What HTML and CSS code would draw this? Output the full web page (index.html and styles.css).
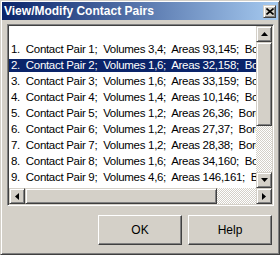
FILE: index.html
```html
<!DOCTYPE html>
<html lang="en">
<head>
  <meta charset="UTF-8">
  <title>View/Modify Contact Pairs</title>
  <link rel="stylesheet" href="styles.css">
</head>
<body>
  <div class="window">
    <div class="titlebar">
      <span class="title">View/Modify Contact Pairs</span>
      <span class="close raised">
        <svg width="8" height="7" viewBox="0 0 8 7"><path d="M0.5 0.5 L7.5 6.5 M7.5 0.5 L0.5 6.5" stroke="#000" stroke-width="1.6" fill="none"/></svg>
      </span>
    </div>

    <div class="listbox">
      <div class="list-top">
        <div class="items">
          <div class="item blank"></div>
          <div class="item">1.  Contact Pair 1;  Volumes 3,4;  Areas 93,145;  Border 1</div>
          <div class="item sel">2.  Contact Pair 2;  Volumes 1,6;  Areas 32,158;  Border 2</div>
          <div class="item">3.  Contact Pair 3;  Volumes 1,6;  Areas 33,159;  Border 3</div>
          <div class="item">4.  Contact Pair 4;  Volumes 1,4;  Areas 10,146;  Border 4</div>
          <div class="item">5.  Contact Pair 5;  Volumes 1,2;  Areas 26,36;  Border 5</div>
          <div class="item">6.  Contact Pair 6;  Volumes 1,2;  Areas 27,37;  Border 6</div>
          <div class="item">7.  Contact Pair 7;  Volumes 1,2;  Areas 28,38;  Border 7</div>
          <div class="item">8.  Contact Pair 8;  Volumes 1,6;  Areas 34,160;  Border 8</div>
          <div class="item">9.  Contact Pair 9;  Volumes 4,6;  Areas 146,161;  Border 9</div>
        </div>
        <div class="vscroll">
          <div class="sbtn raised">
            <svg width="7" height="4" viewBox="0 0 7 4"><path d="M3.5 0 L7 4 L0 4 Z" fill="#000"/></svg>
          </div>
          <div class="vthumb raised"></div>
          <div class="track"></div>
          <div class="sbtn raised">
            <svg width="7" height="4" viewBox="0 0 7 4"><path d="M0 0 L7 0 L3.5 4 Z" fill="#000"/></svg>
          </div>
        </div>
      </div>
      <div class="hscroll">
        <div class="sbtn raised">
          <svg width="4" height="7" viewBox="0 0 4 7"><path d="M4 0 L4 7 L0 3.5 Z" fill="#000"/></svg>
        </div>
        <div class="hthumb raised"></div>
        <div class="track"></div>
        <div class="sbtn raised">
          <svg width="4" height="7" viewBox="0 0 4 7"><path d="M0 0 L4 3.5 L0 7 Z" fill="#000"/></svg>
        </div>
      </div>
    </div>

    <div class="buttons">
      <div class="button">OK</div>
      <div class="button">Help</div>
    </div>
  </div>
</body>
</html>
```

FILE: styles.css
```css
body {
  margin: 0;
  background: #d4d0c8;
  font-family: "Liberation Sans", Arial, sans-serif;
}
.window {
  width: 280px;
  height: 255px;
  box-sizing: border-box;
  padding: 1px;
  background: #d4d0c8;
  border: 1px solid;
  border-color: #d4d0c8 #404040 #404040 #d4d0c8;
  box-shadow: inset 1px 1px #fff, inset -1px -1px #808080;
}
.raised {
  box-sizing: border-box;
  background: #d4d0c8;
  border: 1px solid;
  border-color: #d4d0c8 #404040 #404040 #d4d0c8;
  box-shadow: inset 1px 1px #fff, inset -1px -1px #808080;
}
.titlebar {
  height: 18px;
  display: flex;
  align-items: center;
  justify-content: space-between;
  padding: 0 2px 0 2px;
  background: linear-gradient(to right, #0a246a, #a6caf0);
}
.title {
  color: #fff;
  font-weight: bold;
  font-size: 12px;
}
.close {
  width: 13px;
  height: 13px;
  display: flex;
  align-items: center;
  justify-content: center;
}

.listbox {
  margin: 4px 4px 0 5px;
  height: 182px;
  box-sizing: border-box;
  display: flex;
  flex-direction: column;
  border: 1px solid;
  border-color: #808080 #fff #fff #808080;
  box-shadow: inset 1px 1px #404040, inset -1px -1px #d4d0c8;
  padding: 1px;
}
.list-top {
  flex: 1;
  display: flex;
  min-height: 0;
}
.items {
  flex: 1;
  background: #fff;
  overflow: hidden;
  font-size: 11.5px;
  letter-spacing: -0.3px;
  color: #000;
}
.item {
  height: 13px;
  line-height: 13px;
  margin-bottom: 3px;
  padding-left: 2px;
  white-space: pre;
}
.item.blank {
  height: 14px;
}
.item.sel {
  background: #0a246a;
  color: #fff;
}
.vscroll {
  width: 16px;
  display: flex;
  flex-direction: column;
}
.sbtn {
  width: 16px;
  height: 16px;
  flex: none;
  display: flex;
  align-items: center;
  justify-content: center;
}
.vthumb {
  height: 84px;
  flex: none;
}
.track {
  flex: 1;
  background: repeating-conic-gradient(#fff 0 25%, #d4d0c8 0 50%) 0 0 / 2px 2px;
}
.hscroll {
  height: 16px;
  display: flex;
}
.hthumb {
  width: 192px;
  flex: none;
}

.buttons {
  display: flex;
  justify-content: flex-end;
  gap: 6px;
  margin: 9px 6px 0 0;
}
.button {
  width: 84px;
  height: 30px;
  box-sizing: border-box;
  display: flex;
  align-items: center;
  justify-content: center;
  font-size: 12px;
  color: #000;
  border: 1px solid;
  border-color: #fff #404040 #404040 #fff;
  box-shadow: inset -1px -1px #808080;
}
```
